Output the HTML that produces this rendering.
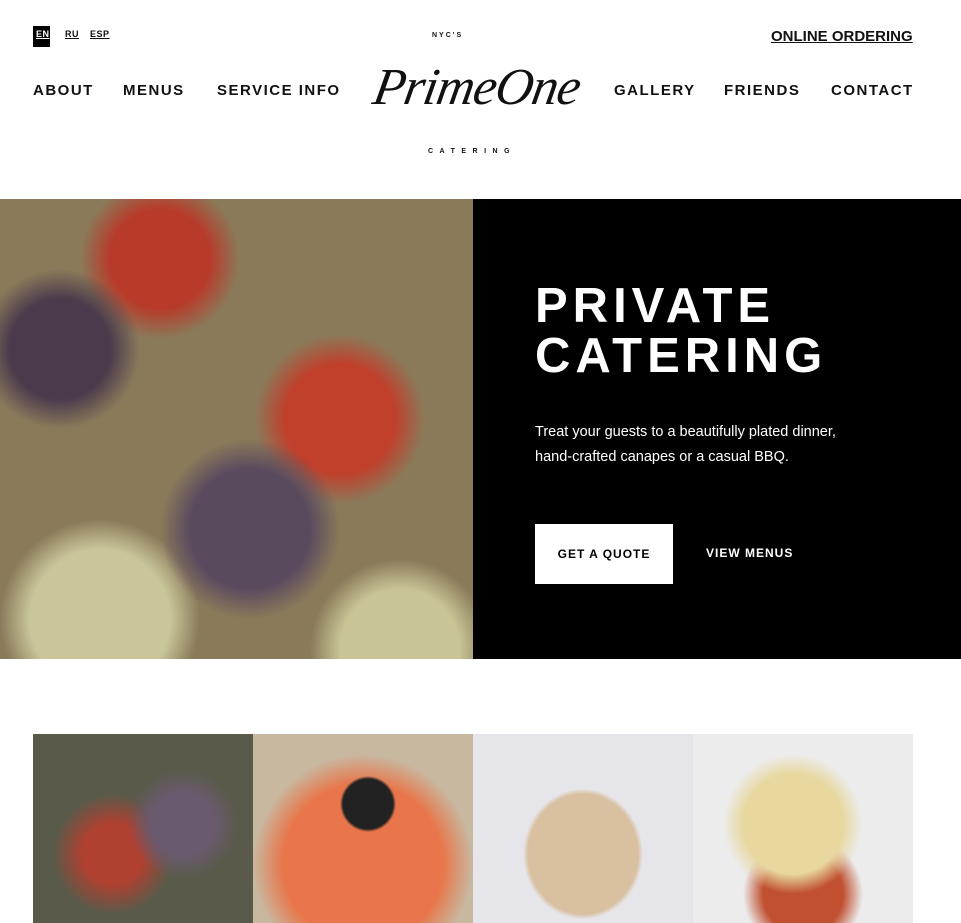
<!DOCTYPE html>
<html><head><meta charset="utf-8"><style>
*{margin:0;padding:0;box-sizing:border-box}
body{width:961px;height:923px;overflow:hidden;background:#fff;font-family:"Liberation Sans",sans-serif;color:#111;position:relative}
.a{position:absolute}
.lang{top:29px;font-size:9px;font-weight:bold;text-decoration:underline;letter-spacing:.5px;font-family:"Liberation Sans Narrow","Liberation Sans",sans-serif}
.nav{top:82px;font-size:15px;font-weight:bold;letter-spacing:1.5px}
.small{font-size:7px;font-weight:bold;letter-spacing:3px;font-family:"Liberation Sans Narrow",sans-serif}
</style></head><body>
<div class="a" style="left:33px;top:26px;width:17px;height:21px;background:#000"></div>
<div class="a lang" style="left:36px;color:#fff">EN</div>
<div class="a lang" style="left:65px">RU</div>
<div class="a lang" style="left:90px">ESP</div>
<div class="a" style="left:771px;top:28px;font-size:15px;font-weight:bold;text-decoration:underline">ONLINE ORDERING</div>
<div class="a nav" style="left:33px">ABOUT</div>
<div class="a nav" style="left:123px">MENUS</div>
<div class="a nav" style="left:217px">SERVICE INFO</div>
<div class="a nav" style="left:614px">GALLERY</div>
<div class="a nav" style="left:724px">FRIENDS</div>
<div class="a nav" style="left:831px">CONTACT</div>
<div class="a small" style="left:432px;top:32px;letter-spacing:2px">NYC'S</div>
<div class="a small" style="left:428px;top:148px;letter-spacing:6.5px">CATERING</div>
<div class="a" style="left:374px;top:58px;font-family:'Liberation Serif',serif;font-style:italic;font-size:52px;letter-spacing:-1px;transform:skewX(-10deg)">PrimeOne</div>
<div class="a" style="left:0;top:199px;width:473px;height:460px;background:
radial-gradient(circle at 250px 330px,#5a4a5e 0 60px,transparent 90px),
radial-gradient(circle at 60px 150px,#4a3a4c 0 50px,transparent 80px),
radial-gradient(circle at 160px 60px,#b83b2a 0 50px,transparent 80px),
radial-gradient(circle at 340px 220px,#c0402c 0 55px,transparent 85px),
radial-gradient(circle at 100px 420px,#c9c69a 0 70px,transparent 100px),
radial-gradient(circle at 400px 450px,#c8c495 0 60px,transparent 90px),
#8a7a5a"></div>
<div class="a" style="left:473px;top:199px;width:488px;height:460px;background:#000"></div>
<div class="a" style="left:535px;top:281px;color:#fff;font-size:49px;font-weight:bold;letter-spacing:5px;line-height:50px">PRIVATE<br>CATERING</div>
<div class="a" style="left:535px;top:420px;color:#fff;font-size:14.5px;line-height:25px">Treat your guests to a beautifully plated dinner,<br>hand-crafted canapes or a casual BBQ.</div>
<div class="a" style="left:535px;top:524px;width:138px;height:60px;background:#fff;color:#000;font-size:12px;font-weight:bold;letter-spacing:1px;text-align:center;line-height:60px;font-family:'Liberation Sans Narrow',sans-serif">GET A QUOTE</div>
<div class="a" style="left:706px;top:546px;color:#fff;font-size:12px;font-weight:bold;letter-spacing:1px;font-family:'Liberation Sans Narrow',sans-serif">VIEW MENUS</div>
<div class="a" style="left:33px;top:734px;width:220px;height:189px;background:radial-gradient(circle at 150px 90px,#6a5a70 0 30px,transparent 55px),radial-gradient(circle at 80px 120px,#b04030 0 30px,transparent 60px),#5a5a4a"></div>
<div class="a" style="left:253px;top:734px;width:220px;height:189px;background:radial-gradient(circle at 115px 70px,#222 0 25px,transparent 28px),radial-gradient(circle at 110px 130px,#e8764a 0 80px,transparent 110px),#c8b8a0"></div>
<div class="a" style="left:473px;top:734px;width:220px;height:189px;background:radial-gradient(ellipse at 110px 120px,#d8c0a0 0 55px,transparent 60px),#e6e6ea"></div>
<div class="a" style="left:693px;top:734px;width:220px;height:189px;background:radial-gradient(circle at 100px 90px,#e8d8a0 0 50px,transparent 70px),radial-gradient(circle at 110px 160px,#c05030 0 40px,transparent 60px),#ececec"></div>
</body></html>
